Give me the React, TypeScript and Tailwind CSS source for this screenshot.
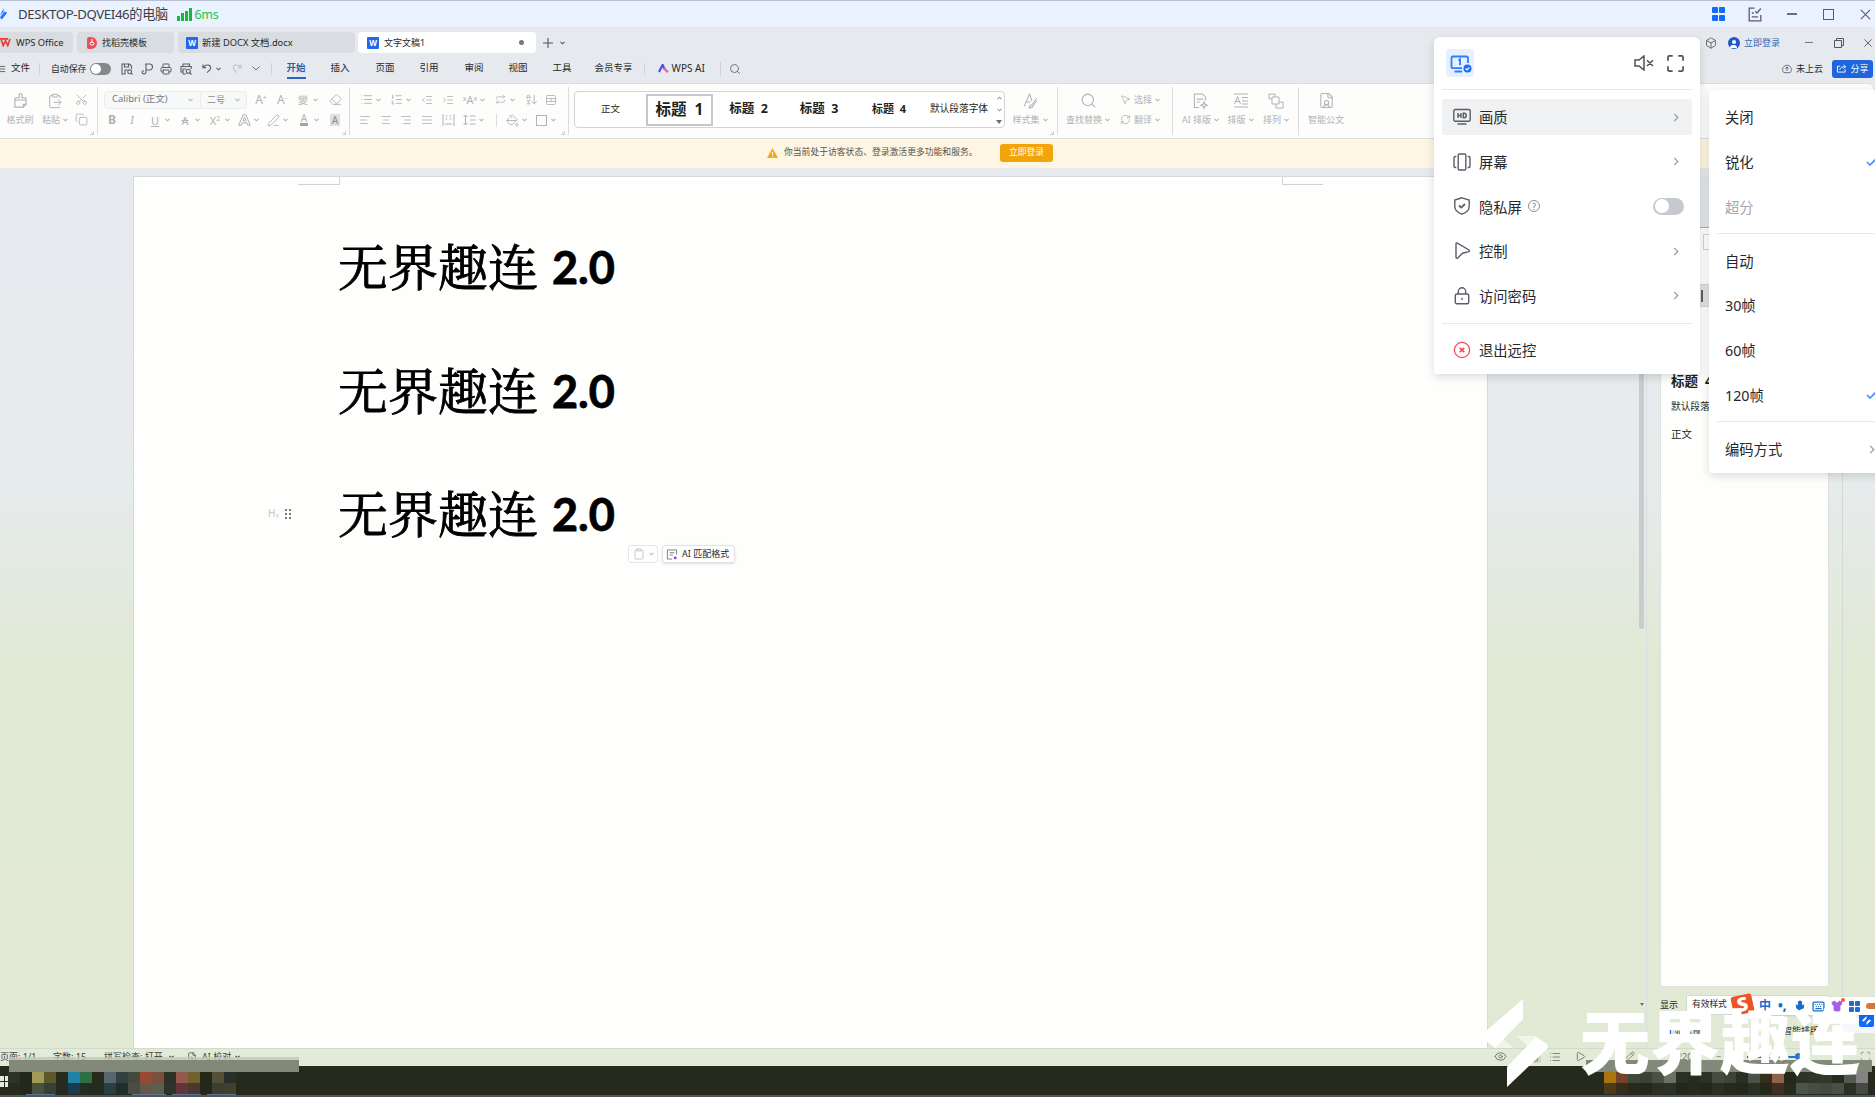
import React from "react";
import {
  AlignCenter, AlignJustify, AlignLeft, AlignRight, Clipboard, ClipboardPaste, Copy, Eraser, FilePlus2,
  FileUser, Indent, Outdent, List, ListOrdered, MousePointer2, PaintBucket, Printer, Redo2, RefreshCw,
  Save, Scissors, Search, Square, Undo2, Box, Mic, Shirt, Keyboard, Eye, Play, Globe, Pencil, PenLine,
  TableCellsSplit, ArrowDownAZ, Repeat, Scan, Brush, FileSearch,
} from "lucide-react";

const Caret = ({ className = "" }: { className?: string }) => (
  <svg viewBox="0 0 6 4" className={"h-[4px] w-[5px] shrink-0 " + className}>
    <path d="M0.6 0.6 3 3 5.4 0.6" fill="none" stroke="currentColor" strokeWidth="1.3" />
  </svg>
);

const Chevron = ({ className = "" }: { className?: string }) => (
  <svg viewBox="0 0 6 10" className={"h-[9px] w-[6px] shrink-0 " + className}>
    <path d="M1 1 5 5 1 9" fill="none" stroke="#9297a3" strokeWidth="1.3" />
  </svg>
);

const Check = ({ className = "" }: { className?: string }) => (
  <svg viewBox="0 0 11 8" className={"h-[8px] w-[11px] shrink-0 " + className}>
    <path d="M1 4 4 7 10 1" fill="none" stroke="#3f8cff" strokeWidth="1.6" />
  </svg>
);

const Launcher = () => (
  <svg viewBox="0 0 5 5" className="absolute right-[3px] bottom-[3px] h-[4px] w-[4px]">
    <path d="M4.5 0V4.5H0M1.5 1.5 4 4" fill="none" stroke="#b9bbbd" strokeWidth="0.9" />
  </svg>
);

/* One ribbon button: a 14px glyph and, when it opens a list, a caret. */
function Tool({ gap, caret, children }: { gap: string; caret?: boolean; children: React.ReactNode }) {
  return (
    <div className={"flex shrink-0 items-center gap-[3px] " + gap}>
      <div className="flex h-[14px] w-[14px] items-center justify-center text-[12px] leading-none">{children}</div>
      {caret && <Caret />}
    </div>
  );
}

const ic = { size: 13, strokeWidth: 1.7 };

function BigTool({ icon, label, caret, className }: { icon: React.ReactNode; label: string; caret?: boolean; className: string }) {
  return (
    <div className={"flex shrink-0 flex-col items-center pt-[8px] " + className}>
      <div className="flex h-[17px] items-center">{icon}</div>
      <div className="mt-[4px] flex h-[13px] items-center gap-[3px] whitespace-nowrap text-[9px] leading-none">
        {label}
        {caret && <Caret />}
      </div>
    </div>
  );
}

function WordIcon() {
  return (
    <span className="flex h-[12px] w-[12px] shrink-0 items-center justify-center rounded-[1px] bg-[#2468ea] text-[8px] font-bold leading-none text-white">
      W
    </span>
  );
}

function TitleBar() {
  return (
    <header className="flex h-[27px] shrink-0 items-center border-t border-[#b7c1d3] bg-[#eaf1ff] text-[#3c4048]">
      <svg viewBox="0 0 9 14" className="h-[13px] w-[8px]">
        <path d="M4 0V4L0 8M0 10 2 13 8 5 5 3.5Z" fill="#2277ff" />
      </svg>
      <span className="ml-[10px] w-[151px] pt-[2px] whitespace-nowrap text-[13.2px] tracking-[-0.35px]">DESKTOP-DQVEI46的电脑</span>
      <div className="ml-[8px] flex h-[13px] items-end gap-[1.5px]">
        <i className="h-[5px] w-[2.5px] bg-[#16b93c]" />
        <i className="h-[8px] w-[2.5px] bg-[#16b93c]" />
        <i className="h-[10px] w-[2.5px] bg-[#16b93c]" />
        <i className="h-[13px] w-[2.5px] bg-[#16b93c]" />
      </div>
      <span className="ml-[3px] pt-[2px] text-[12.5px] tracking-[-0.3px] text-[#1ec63f]">6ms</span>
      <div className="ml-auto flex items-center pr-[4px]">
        <div className="grid grid-cols-2 gap-[1.5px]">
          <i className="h-[6px] w-[6px] rounded-[1px] bg-[#0f6cff]" />
          <i className="h-[6px] w-[6px] rounded-[1px] bg-[#0f6cff]" />
          <i className="h-[6px] w-[6px] rounded-[1px] bg-[#0f6cff]" />
          <i className="h-[6px] w-[6px] rounded-[1px] bg-[#0f6cff]" />
        </div>
        <svg viewBox="0 0 14 15" className="ml-[23px] h-[15px] w-[14px]" fill="none" stroke="#5a5e67" strokeWidth="1.3">
          <path d="M6.5 1.2H1.2V13.8H12.8V8M3.8 6H5.8M3.8 9.8H10M7.3 4.3 9 6 12.8 1.5" />
        </svg>
        <i className="ml-[25px] h-[1.5px] w-[10px] bg-[#6a6e77]" />
        <i className="ml-[26px] h-[11px] w-[11px] border-[1.5px] border-[#5a5e67]" />
        <svg viewBox="0 0 12 12" className="ml-[26px] h-[11px] w-[11px]" stroke="#5a5e67" strokeWidth="1.2">
          <path d="M1 1 11 11M11 1 1 11" />
        </svg>
      </div>
    </header>
  );
}

function TabBar() {
  return (
    <div className="flex h-[31px] shrink-0 items-center text-[9.5px] text-[#26282b]">
      <div className="flex h-[21px] w-[73px] items-center rounded-r-[4px] bg-[#d9dce0]">
        <svg viewBox="0 0 12 10" className="h-[9px] w-[11px]" fill="none" stroke="#ea3b35" strokeWidth="1.8">
          <path d="M0 1H9M1 1 3.5 8.5 6 3 8.5 8.5 11 1" />
        </svg>
        <span className="ml-[5px] whitespace-nowrap text-[9.3px]">WPS Office</span>
      </div>
      <div className="ml-[4px] flex h-[21px] w-[97px] items-center rounded-[4px] bg-[#d9dce0] pl-[10px]">
        <span className="flex h-[12px] w-[10px] items-center justify-center rounded-l-[2px] rounded-r-[6px] bg-[#ee4f55]">
          <svg viewBox="0 0 6 8" className="h-[8px] w-[6px]" fill="none" stroke="white"><path d="M3 0V4M1 4.5a2 1.6 0 1 0 4 0 2 1.6 0 1 0-4 0" /></svg>
        </span>
        <span className="ml-[5px] text-[9px]">找稻壳模板</span>
      </div>
      <div className="ml-[4px] flex h-[21px] w-[177px] items-center rounded-[4px] bg-[#d9dce0] pl-[8px]">
        <WordIcon />
        <span className="ml-[4px] whitespace-nowrap text-[9.3px]">新建 DOCX 文档.docx</span>
      </div>
      <div className="ml-[3px] flex h-[21px] w-[178px] items-center rounded-[4px] bg-white pl-[9px]">
        <WordIcon />
        <span className="ml-[5px] text-[9px]">文字文稿1</span>
        <i className="ml-auto mr-[12px] h-[5px] w-[5px] rounded-full bg-[#77797c]" />
      </div>
      <svg viewBox="0 0 10 10" className="ml-[7px] h-[10px] w-[10px]" stroke="#54575a" strokeWidth="1.1"><path d="M5 0V10M0 5H10" /></svg>
      <Caret className="ml-[7px] text-[#54575a]" />
      <div className="ml-auto flex items-center pr-[3px]">
        <Box size={12} strokeWidth={2} color="#6a6e72" />
        <span className="ml-[11px] flex h-[12px] w-[12px] flex-col items-center justify-end overflow-hidden rounded-full bg-[#2456cf] pb-[1px]">
          <i className="h-[4px] w-[4px] rounded-full bg-white" />
          <i className="mt-[1px] h-[3px] w-[7px] rounded-t-full bg-white" />
        </span>
        <span className="ml-[4px] text-[9px] text-[#2f68b8]">立即登录</span>
        <i className="ml-[25px] h-px w-[8px] bg-[#77797c]" />
        <svg viewBox="0 0 10 10" className="ml-[21px] h-[10px] w-[10px]" fill="none" stroke="#54575a"><path d="M0.5 2.5H7.5V9.5H0.5ZM2.5 2.5V0.5H9.5V7.5H7.5" /></svg>
        <svg viewBox="0 0 9 9" className="ml-[20px] h-[8px] w-[8px]" stroke="#54575a"><path d="M0.5 0.5 8.5 8.5M8.5 0.5 0.5 8.5" /></svg>
      </div>
    </div>
  );
}

const menuTabs: [string, string][] = [
  ["插入", "ml-[25px]"], ["页面", "ml-[26px]"], ["引用", "ml-[25px]"], ["审阅", "ml-[26px]"],
  ["视图", "ml-[25px]"], ["工具", "ml-[25px]"], ["会员专享", "ml-[23px]"],
];

function MenuBar() {
  return (
    <div className="flex h-[25px] shrink-0 items-center pb-[4px] text-[9.5px] text-[#26282b]">
      <svg viewBox="0 0 7 8" className="h-[8px] w-[6px]" stroke="#54575a"><path d="M0 1H6M0 4H6M0 7H6" /></svg>
      <span className="ml-[5px] w-[19px] whitespace-nowrap">文件</span>
      <i className="ml-[9px] h-[12px] w-px bg-[#cfd2d6]" />
      <span className="ml-[11px] w-[36px] whitespace-nowrap text-[8.9px]">自动保存</span>
      <span className="ml-[3px] flex h-[12px] w-[21px] items-center rounded-full bg-[#85878a] p-[1px]">
        <i className="h-[10px] w-[10px] rounded-full bg-white" />
      </span>
      <div className="ml-[10px] flex items-center gap-[7.5px] text-[#5b5e62]">
        <svg viewBox="0 0 12 12" className="h-[12px] w-[12px]" fill="none" stroke="currentColor" strokeWidth="1.1"><path d="M4.5 11H1V1H8.5L10.5 3V6M3.5 1V4H7.5V1M4 11V7H6.5" /><circle cx="8.6" cy="8.8" r="1.9" /><path d="M10 10.2 11.5 11.5" /></svg>
        <svg viewBox="0 0 12 12" className="h-[12px] w-[12px]" fill="none" stroke="currentColor" strokeWidth="1.1"><path d="M4 1H8.5a2.5 2.5 0 0 1 0 6H5V1M5 7V9.5a2 1.6 0 1 1-2-1.8" /></svg>
        <Printer size={12} strokeWidth={2} />
        <svg viewBox="0 0 12 12" className="h-[12px] w-[12px]" fill="none" stroke="currentColor" strokeWidth="1.1"><path d="M3 3.5V1H9.5V3.5M3 9H1V3.5H11.2V6M3 11V6H6M3 11H6" /><circle cx="8.3" cy="8.3" r="2" /><path d="M9.8 9.8 11.5 11.5" /></svg>
      </div>
      <svg viewBox="0 0 11 11" className="ml-[10px] h-[11px] w-[10px]" fill="none" stroke="#5b5e62" strokeWidth="1.2"><path d="M1 1V4.5H4.5M1.3 4.2C4 0.6 9.5 1 9.5 4.8 9.5 7 7.5 8.5 5.5 10" /></svg>
      <Caret className="ml-[4px] text-[#5b5e62]" />
      <svg viewBox="0 0 11 11" className="ml-[11px] h-[11px] w-[10px]" fill="none" stroke="#c0c3c7" strokeWidth="1.2"><path d="M10 1V4.5H6.5M9.7 4.2C7 0.6 1.5 1 1.5 4.8 1.5 7 3.5 8.5 5.5 10" /></svg>
      <svg viewBox="0 0 8 5" className="ml-[10px] h-[5px] w-[8px]" fill="none" stroke="#6a6e72"><path d="M0.5 0.5 4 4 7.5 0.5" /></svg>
      <i className="ml-[11px] h-[12px] w-px bg-[#cfd2d6]" />
      <span className="relative ml-[15px] w-[19px] whitespace-nowrap font-bold text-[#2a5ca8]">
        开始
        <i className="absolute -bottom-[3px] left-0 h-[1.5px] w-[19px] bg-[#2a64bb]" />
      </span>
      {menuTabs.map(([label, gap]) => (
        <span key={label} className={"shrink-0 whitespace-nowrap " + gap}>{label}</span>
      ))}
      <i className="ml-[11px] h-[12px] w-px bg-[#cfd2d6]" />
      <svg viewBox="0 0 12 10" className="ml-[13px] h-[9px] w-[11px]" fill="none" strokeWidth="2.4">
        <path d="M1 9 5 1 7.5 6" stroke="#3f54ee" />
        <path d="M6.5 4 8 6.5 11 9" stroke="#ee55a8" />
      </svg>
      <span className="ml-[3px] whitespace-nowrap text-[10px]">WPS AI</span>
      <i className="ml-[15px] h-[14px] w-px bg-[#cfd2d6]" />
      <Search size={12} strokeWidth={1.9} className="ml-[8px] text-[#6a6e72]" />
      <div className="ml-auto flex items-center pr-[2px]">
        <svg viewBox="0 0 13 12" className="h-[11px] w-[12px]" fill="none" stroke="#6a6e72"><path d="M3 10.5a4.8 4.8 0 1 1 7 0Z" /><path d="M6.5 8.5V4.5M4.8 6 6.5 4.2 8.2 6" stroke="#3b52c4" /></svg>
        <span className="ml-[3px] text-[9px]">未上云</span>
        <span className="ml-[9px] flex h-[18px] w-[41px] items-center justify-center gap-[3px] rounded-[3px] bg-[#1f66dc] text-white">
          <svg viewBox="0 0 11 10" className="h-[9px] w-[11px]" fill="none" stroke="white"><path d="M4 2.5H1V9H9.5V6M3.5 6.5C4 4 6 3 10 3M7.8 0.8 10 3 7.8 5.2" /></svg>
          <span className="text-[9px]">分享</span>
        </span>
      </div>
    </div>
  );
}

const Sep = () => <i className="my-[3px] w-px shrink-0 bg-[#dadcde]" />;

function Ribbon() {
  return (
    <div className="mr-[2px] flex h-[56px] shrink-0 rounded-tr-[5px] border-t border-b border-[#dadde2] bg-[#fdfdfc] text-[#b0b2b5]">
      <div className="relative flex w-[97px] shrink-0">
        <BigTool className="w-[40px]" label="格式刷" icon={
          <svg viewBox="0 0 16 17" className="h-[17px] w-[15px]" fill="none" stroke="currentColor" strokeWidth="1.2"><path d="M6.5 5.5V2Q8 0 9.5 2V5.5H13Q14 5.5 14 7V8H2V7Q2 5.5 3 5.5ZM2 8V15.5H11L14 12.5V8M11 15.5V12.5H14" /></svg>
        } />
        <BigTool className="w-[30px]" label="粘贴" caret icon={<ClipboardPaste size={16} strokeWidth={1.5} />} />
        <div className="ml-[5px] flex flex-col pt-[9px]">
          <Scissors size={13} strokeWidth={1.6} className="-rotate-90" />
          <Copy size={13} strokeWidth={1.6} className="mt-[7px]" />
        </div>
        <Launcher />
      </div>
      <Sep />
      <div className="relative w-[251px] shrink-0 pt-[6px]">
        <div className="flex h-[19px] items-center">
          <div className="ml-[6px] flex h-[18px] w-[97px] items-center justify-between rounded-l-[3px] border border-[#eceeee] bg-[#f7f8f8] px-[7px] text-[9.5px] text-[#77797c]">
            Calibri (正文)<Caret className="text-[#b3b5b8]" />
          </div>
          <div className="flex h-[18px] w-[46px] items-center justify-between rounded-r-[3px] border border-l-0 border-[#eceeee] bg-[#f7f8f8] px-[6px] text-[9px] text-[#8b8d90]">
            二号<Caret className="text-[#b3b5b8]" />
          </div>
          <Tool gap="ml-[7px]"><span>A<sup className="text-[7px]">+</sup></span></Tool>
          <Tool gap="ml-[7px]"><span>A<sup className="text-[7px]">-</sup></span></Tool>
          <Tool gap="ml-[7px]" caret><span className="text-[10px]">變</span></Tool>
          <Tool gap="ml-[10px]"><Eraser {...ic} /></Tool>
        </div>
        <div className="mt-[2px] flex h-[18px] items-center">
          <Tool gap="ml-[7px]"><b>B</b></Tool>
          <Tool gap="ml-[6px]"><i className="font-serif">I</i></Tool>
          <Tool gap="ml-[9px]" caret><span className="text-[11px] underline">U</span></Tool>
          <Tool gap="ml-[8px]" caret><span className="text-[11px] line-through">A</span></Tool>
          <Tool gap="ml-[8px]" caret><span className="text-[11px]">X<sup className="text-[7px]">2</sup></span></Tool>
          <Tool gap="ml-[7px]" caret><svg viewBox="0 0 13 12" className="h-[12px] w-[13px]" fill="none" stroke="currentColor"><path d="M0.7 11.3 5.2 0.8H7.8L12.3 11.3H9.8L8.8 8.8H4.2L3.2 11.3ZM5 6.8H8L6.5 3Z" /></svg></Tool>
          <Tool gap="ml-[7px]" caret><PenLine {...ic} /></Tool>
          <Tool gap="ml-[9px]" caret><span className="border-b-[3px] border-[#a0a2a5] px-[1px] text-[10px] leading-[9px]">A</span></Tool>
          <Tool gap="ml-[9px]"><span className="bg-[#dddfe0] px-[2px] text-[10px] leading-[12px] text-[#8b8d90]">A</span></Tool>
        </div>
        <Launcher />
      </div>
      <Sep />
      <div className="relative w-[218px] shrink-0 pt-[6px]">
        <div className="flex h-[19px] items-center">
          <Tool gap="ml-[9px]" caret><List {...ic} /></Tool>
          <Tool gap="ml-[8px]" caret><ListOrdered {...ic} /></Tool>
          <Tool gap="ml-[9px]"><Outdent {...ic} size={12} /></Tool>
          <Tool gap="ml-[7px]"><Indent {...ic} size={12} /></Tool>
          <Tool gap="ml-[8px]" caret><span className="text-[11px]">ˣAˣ</span></Tool>
          <Tool gap="ml-[8px]" caret><Repeat {...ic} size={11} /></Tool>
          <Tool gap="ml-[9px]"><ArrowDownAZ {...ic} className="-scale-x-100" /></Tool>
          <Tool gap="ml-[6px]"><TableCellsSplit {...ic} size={12} /></Tool>
        </div>
        <div className="mt-[2px] flex h-[18px] items-center">
          <Tool gap="ml-[8px]"><AlignLeft {...ic} size={12} /></Tool>
          <Tool gap="ml-[7px]"><AlignCenter {...ic} size={12} /></Tool>
          <Tool gap="ml-[6px]"><AlignRight {...ic} size={12} /></Tool>
          <Tool gap="ml-[7px]"><AlignJustify {...ic} size={12} /></Tool>
          <Tool gap="ml-[7px]">
            <svg viewBox="0 0 13 12" className="h-[12px] w-[13px]" fill="none" stroke="currentColor"><path d="M1 0V12M12 0V12M3.5 2H5.5M7.5 2H9.5M3.5 5H5.5M7.5 5H9.5M3 10H10" /></svg>
          </Tool>
          <Tool gap="ml-[7px]" caret>
            <svg viewBox="0 0 13 12" className="h-[12px] w-[13px]" fill="none" stroke="currentColor"><path d="M2.5 1V11M0.5 3 2.5 1 4.5 3M0.5 9 2.5 11 4.5 9M7 2H12.5M7 6H12.5M7 10H12.5" /></svg>
          </Tool>
          <i className="ml-[12px] h-[13px] w-px bg-[#dadcde]" />
          <Tool gap="ml-[8px]" caret><PaintBucket {...ic} /></Tool>
          <Tool gap="ml-[7px]" caret><span className="h-[11px] w-[11px] border border-[#b0b2b5]" /></Tool>
        </div>
        <Launcher />
      </div>
      <Sep />
      <div className="mt-[7px] ml-[5px] flex h-[37px] w-[431px] shrink-0 items-center rounded-[4px] border border-[#d2d4d6] bg-white text-center text-[#1d1f21]">
        <span className="w-[71px] text-[9.5px]">正文</span>
        <span className="flex h-[32px] w-[67px] items-center justify-center border-2 border-[#c6c9c9] text-[15.5px] font-bold">标题&nbsp;&nbsp;1</span>
        <span className="w-[71px] text-[12.5px] font-bold">标题&nbsp;&nbsp;2</span>
        <span className="w-[70px] text-[12.5px] font-bold">标题&nbsp;&nbsp;3</span>
        <span className="w-[70px] text-[11px] font-bold">标题&nbsp;&nbsp;4</span>
        <span className="w-[70px] whitespace-nowrap text-[9.7px]">默认段落字体</span>
        <div className="flex flex-1 flex-col items-center gap-[8px] pl-[0px] text-[#9a9c9f]">
          <Caret className="rotate-180" />
          <Caret />
          <i className="h-0 w-0 border-x-[3px] border-t-[4px] border-x-transparent border-t-[#6a6e72]" />
        </div>
      </div>
      <div className="relative flex w-[52px] shrink-0">
        <BigTool className="w-[50px]" label="样式集" caret icon={
          <svg viewBox="0 0 15 17" className="h-[16px] w-[15px]" fill="none" stroke="currentColor" strokeWidth="1.1"><path d="M0.8 14 6.5 1.2 9 8.5M3 9.5H7.5M14 5.5 9 12.5Q6.5 12.5 6 15.8 9.8 16 10.2 13.5L14 8.5" /></svg>
        } />
        <Launcher />
      </div>
      <Sep />
      <div className="flex w-[114px] shrink-0">
        <BigTool className="w-[60px]" label="查找替换" caret icon={<Search size={17} strokeWidth={1.5} />} />
        <div className="ml-[2px] flex flex-col gap-[7px] pt-[9px] text-[9px]">
          <div className="flex h-[13px] items-center gap-[3px]"><MousePointer2 size={11} strokeWidth={1.8} />选择<Caret /></div>
          <div className="flex h-[13px] items-center gap-[3px]"><RefreshCw size={11} strokeWidth={1.8} />翻译<Caret /></div>
        </div>
      </div>
      <Sep />
      <div className="flex w-[125px] shrink-0 pl-[6px]">
        <BigTool className="w-[43px]" label="AI 排版" caret icon={
          <svg viewBox="0 0 16 17" className="h-[16px] w-[15px]" fill="none" stroke="currentColor" strokeWidth="1.1"><path d="M6.5 15.5H1.5V1H10L13.5 4.5V8M4 6.5H11M4 9.5H7M11.8 9.5 12.8 12 15.3 13 12.8 14 11.8 16.5 10.8 14 8.3 13 10.8 12Z" /></svg>
        } />
        <BigTool className="w-[37px]" label="排版" caret icon={
          <svg viewBox="0 0 16 15" className="h-[15px] w-[16px]" fill="none" stroke="currentColor"><path d="M1 1H15M9 4.5H15M9 8H15M9 11H15M1 14H15M1.5 11 4.5 3.5 7.5 11M2.5 8.5H6.5" /></svg>
        } />
        <BigTool className="w-[34px]" label="排列" caret icon={
          <svg viewBox="0 0 16 16" className="h-[16px] w-[16px]" fill="none" stroke="currentColor"><path d="M4 6H1V1H7V4M4 4H11V11H4ZM11 9H15V15H8V11" /></svg>
        } />
      </div>
      <Sep />
      <BigTool className="w-[54px]" label="智能公文" icon={<FileUser size={17} strokeWidth={1.5} />} />
    </div>
  );
}

function Notice() {
  return (
    <div className="flex h-[29px] shrink-0 items-center bg-[#fef5e2] pb-px pl-[767px] text-[8.8px] text-[#55534d]">
      <svg viewBox="0 0 12 11" className="h-[10px] w-[11px]"><path d="M6 0 12 11H0Z" fill="#f5a615" /><path d="M6 4V7.5M6 8.5V9.6" stroke="white" strokeWidth="1.2" /></svg>
      <span className="ml-[6px] w-[216px] whitespace-nowrap">你当前处于访客状态、登录激活更多功能和服务。</span>
      <span className="flex h-[18px] w-[53px] items-center justify-center rounded-[3px] bg-[#f2a40d] text-white">立即登录</span>
    </div>
  );
}

function Page() {
  return (
    <section className="relative ml-[133px] w-[1355px] shrink-0 border-x border-t border-[#d5d9db] bg-[#fefefd]">
      <div className="flex justify-between pr-[164px] pl-[164px]">
        <i className="h-[8px] w-[42px] border-r border-b border-[#cfd1d2]" />
        <i className="h-[8px] w-[41px] border-b border-l border-[#cfd1d2]" />
      </div>
      <div className="mt-[41px] flex flex-col pl-[204px] text-black">
        {[0, 1, 2].map((n) => (
          <h1 key={n} className="flex h-[123.5px] items-start whitespace-nowrap text-[50px] leading-[76px]">
            <span className="font-['Noto_Serif_CJK_SC','Noto_Serif_SC','Noto_Sans_CJK_SC',serif] [-webkit-text-stroke:0.9px_black]">无界趣连</span>
            <span className="ml-[14px] pt-[3px] font-[Lato] text-[45px] font-bold [-webkit-text-stroke:0.8px_black]">2.0</span>
          </h1>
        ))}
      </div>
      <div className="absolute top-[329px] left-[134px] flex items-center gap-[6px] text-[10px] text-[#c3c5c6]">
        H₁
        <div className="grid grid-cols-2 gap-[2px]">
          {[0, 1, 2, 3, 4, 5].map((n) => <i key={n} className="h-[2px] w-[2px] bg-[#77797c]" />)}
        </div>
      </div>
      <div className="absolute top-[368px] left-[494px] flex gap-[4px] text-[9px] text-[#26282b]">
        <span className="flex h-[18px] w-[30px] items-center justify-center gap-[4px] rounded-[3px] border border-[#e6e7e8] text-[#bbbdc0]">
          <Clipboard size={12} strokeWidth={1.6} /><Caret />
        </span>
        <span className="flex h-[18px] w-[73px] items-center gap-[4px] rounded-[3px] border border-[#e0e2e3] pl-[3px] whitespace-nowrap shadow-sm">
          <svg viewBox="0 0 12 12" className="h-[11px] w-[12px] shrink-0" fill="none" stroke="#77797c"><path d="M11 6V1H1V11H6M3.5 4H8.5M3.5 6.5H7" /><circle cx="9.5" cy="9.5" r="1.7" fill="#8d55ee" stroke="none" /></svg>
          AI 匹配格式
        </span>
      </div>
    </section>
  );
}

function StylePane() {
  return (
    <aside className="relative ml-[2px] flex w-[230px] shrink-0 flex-col border-l border-[#d9dddf] pl-[13px] text-[#1d1f21]">
      <div className="h-[811px] w-[169px] shrink-0 rounded-b-[3px] border border-[#dfe2df] bg-[#fefefd] pt-[193px] pl-[10px]">
        <p className="text-[13.5px] leading-[22px] font-bold">标题&nbsp; 4</p>
        <p className="mt-[5px] text-[9.7px] leading-[20px]">默认段落字体</p>
        <p className="mt-[6px] text-[10.5px] leading-[22px]">正文</p>
      </div>
      <i className="absolute top-0 bottom-0 left-[195px] w-px bg-[#d5d9d6]" />
      <div className="mt-[8px] flex h-[20px] items-center gap-[8px] text-[9px]">
        显示
        <span className="flex h-[20px] w-[143px] items-center rounded-[2px] border border-[#d5d9d2] bg-white pl-[5px] text-[8.8px] tracking-[-0.1px]">有效样式</span>
      </div>
      <div className="mt-[9px] flex h-[14px] items-center gap-[3px] pl-[6px] text-[9px]">
        <i className="h-[5px] w-[5px] bg-[#1b73e8]" />显示预览
        <span className="ml-[70px]">智能排版</span>
      </div>
    </aside>
  );
}

function StatusBar() {
  return (
    <footer className="flex h-[18px] shrink-0 items-center border-t border-[#d3dacb] bg-[#e2ead8] pb-[2px] text-[9px] whitespace-nowrap text-[#3a3d38]">
      <span className="w-[44px]">页面: 1/1</span>
      <span className="w-[43px] pl-[9px]">字数: 15</span>
      <span className="flex w-[100px] items-center gap-[6px] pl-[17px]">拼写检查: 打开<Caret /></span>
      <FileSearch size={10} strokeWidth={1.6} />
      <span className="ml-[5px] flex items-center gap-[4px]">AI 校对<Caret /></span>
      <div className="ml-auto flex items-center text-[#6d7268]">
        <Eye size={13} strokeWidth={1.7} />
        <span className="ml-[20px] flex h-[13px] w-[14px] items-center justify-center bg-[#cdd5c5]"><FileSearch size={10} /></span>
        <List size={12} strokeWidth={1.7} className="ml-[8px]" />
        <Play size={11} strokeWidth={1.9} className="ml-[14px]" />
        <Globe size={11} strokeWidth={1.7} className="ml-[13px]" />
        <Pencil size={11} strokeWidth={1.7} className="ml-[14px]" />
        <span className="ml-[42px]">220%</span>
        <span className="ml-[16px]">−</span>
        <i className="ml-[26px] h-[2px] w-[48px] bg-[#2a6fd6]" />
        <i className="h-[7px] w-[7px] rounded-full bg-[#2a6fd6]" />
        <Scan size={11} strokeWidth={1.5} className="mr-[4px] ml-[58px]" />
      </div>
    </footer>
  );
}

/* Pixelated taskbar thumbnails: upper and lower cell rows on a 12px grid. */
const leftTop = ["#2e3325", "#23281a", "#a49a58", "#5b582e", "#262b1d", "#1f83a8", "#2f6d42", "#262b1d", "#5a6370", "#333f40", "#434a3c", "#964a32", "#7a503c", "#2d3226", "#955a4d", "#735f2d", "#232817", "#554f35", "#272f2b"];
const leftLow = ["#262b1d", "#23281a", "#48523f", "#374034", "#262b1d", "#1b3c50", "#232c26", "#262b1d", "#274043", "#202e2b", "#4a4d43", "#665848", "#5e5d52", "#2d342a", "#60353c", "#483831", "#23281a", "#3c3e2e", "#3e4030"];
const rightTop = ["#a9750f", "#74422a", "#414739", "#3b4133", "#4a5044", "#6b7265", "#2b3022", "#272c1e", "#2d3224", "#454b41", "#3d4335", "#2a2f22", "#4a5149", "#352e1c", "#8f6349", "#23281a", "#2d3426", "#2f372a", "#30372b", "#262b1d", "#55594f", "#838381"];
const rightLow = ["#4b3b18", "#352d1b", "#262b1d", "#23281a", "#2b3022", "#2d3226", "#23281a", "#262b1d", "#23281a", "#2b3023", "#262b1d", "#23281a", "#2b3024", "#23281a", "#402f1f", "#262b1d", "#4d544a", "#474d41", "#43493f", "#4a5045", "#2b3024", "#454943"];

function Cells({ colors }: { colors: string[] }) {
  return (
    <div className="flex h-[11px]">
      {colors.map((c, n) => <i key={n} className="h-full w-[12px]" style={{ backgroundColor: c }} />)}
    </div>
  );
}

function TaskBar() {
  return (
    <div className="relative flex h-[31px] shrink-0 border-b-2 border-[#53555e] bg-[#252a1c]">
      <div className="mt-[10px] grid h-[11px] w-[8px] grid-cols-2 gap-px">
        <i className="bg-[#e6e8e2]" /><i className="bg-[#e6e8e2]" /><i className="bg-[#e6e8e2]" /><i className="bg-[#e6e8e2]" />
      </div>
      <div className="mt-[6px]"><Cells colors={leftTop} /><Cells colors={leftLow} />
        <div className="flex h-[1px] gap-[6px] pl-[18px]">
          <i className="w-[29px] bg-[#58748a]" /><i className="ml-[71px] w-[34px] bg-[#58748a]" /><i className="w-[29px] bg-[#58748a]" /><i className="w-[29px] bg-[#58748a]" />
        </div>
      </div>
      <div className="mt-[6px] mr-[7px] ml-auto"><Cells colors={rightTop} /><Cells colors={rightLow} /></div>
      <i className="absolute -top-[9px] left-[9px] h-[3px] w-[290px] bg-[#c3cab7]/80" />
      <i className="absolute -top-[6px] left-[9px] h-[12px] w-[290px] bg-[#838978]" />
      <i className="absolute -top-[6px] left-[1586px] h-[12px] w-[286px] bg-[#838978]" />
    </div>
  );
}

const menuIcon = "h-[18px] w-[18px] shrink-0";

const menuItems: { label: string; icon: React.ReactNode; end: React.ReactNode; help?: boolean; active?: boolean }[] = [
  {
    label: "画质", active: true, end: <Chevron className="mr-[13px]" />,
    icon: <><rect x="0.8" y="1.5" width="16.4" height="11.8" rx="1.5" /><path d="M4.5 16H13.5M5 5V10M8 5V10M5 7.5H8M10.3 5.3V9.7H11.3a2 2.2 0 0 0 0-4.4Z" /></>,
  },
  {
    label: "屏幕", end: <Chevron className="mr-[13px]" />,
    icon: <><rect x="5.2" y="1" width="7.6" height="16" rx="1" /><path d="M3.3 3.5H2.4Q1 3.5 1 5V13Q1 14.5 2.4 14.5H3.3M14.7 3.5H15.6Q17 3.5 17 5V13Q17 14.5 15.6 14.5H14.7" /></>,
  },
  {
    label: "隐私屏", help: true,
    end: <span className="mr-[8px] flex h-[17px] w-[31px] items-center rounded-full bg-[#c6c9d1] p-[1.5px]"><i className="h-[14px] w-[14px] rounded-full bg-white" /></span>,
    icon: <><path d="M9 0.8 16.2 3V9.5Q16.2 14.5 9 17.2 1.8 14.5 1.8 9.5V3Z" /><path d="M6 8.5 8.3 10.6 12 7" strokeWidth="1.8" /></>,
  },
  { label: "控制", end: <Chevron className="mr-[13px]" />, icon: <path d="M3 2Q3 0.5 4.3 1.2L16 8Q17 9 15.7 9.6L9.5 11.2 5 15.8Q3 17 3 15Z" /> },
  {
    label: "访问密码", end: <Chevron className="mr-[13px]" />,
    icon: <><rect x="2.3" y="7" width="13.4" height="9.8" rx="1.5" /><path d="M5.3 7V4.5a3.7 3.7 0 0 1 7.4 0V7M9 10.8V13" /></>,
  },
];

function RemoteMenu() {
  return (
    <div className="absolute top-[37px] left-[1434px] h-[337px] w-[266px] rounded-[6px] rounded-b-[2px] bg-white px-[8px] pt-[12px] text-[14.3px] text-[#25282d] shadow-[0_3px_10px_rgba(0,0,0,0.14)]">
      <div className="flex h-[28px] items-center pl-[4px]">
        <span className="flex h-[28px] w-[28px] items-center justify-center rounded-[4px] bg-[#e7f0ff] pt-px pl-px">
          <svg viewBox="0 0 22 18" className="h-[18px] w-[22px]" fill="none" stroke="#2c7dff" strokeWidth="1.8">
            <path d="M12 13.2H3Q1.5 13.2 1.5 11.7V3Q1.5 1.5 3 1.5H16.5Q18 1.5 18 3V8M4.5 16.5H12M8.5 5.3 10 4.3V10.2" />
            <circle cx="17.5" cy="13.5" r="4" fill="#1b6dff" stroke="none" />
            <path d="M15.6 13.5 17 14.9 19.4 12.4" stroke="white" strokeWidth="1.1" />
          </svg>
        </span>
        <svg viewBox="0 0 20 16" className="ml-[160px] h-[16px] w-[20px]" fill="none" stroke="#4d515a" strokeWidth="1.5">
          <path d="M1 5H5L10 1V15L5 11H1ZM13 5.2 19 11M19 5.2 13 11" />
        </svg>
        <svg viewBox="0 0 18 18" className="ml-[13px] h-[17px] w-[17px]" fill="none" stroke="#4d515a" strokeWidth="1.8">
          <path d="M1 6V2.5Q1 1 2.5 1H6M12 1H15.5Q17 1 17 2.5V6M17 12V15.5Q17 17 15.5 17H12M6 17H2.5Q1 17 1 15.5V12" />
        </svg>
      </div>
      <i className="mt-[12px] block h-px bg-[#e8e9ec]" />
      <div className="mt-[9px] flex flex-col gap-[8.7px]">
        {menuItems.map((m) => (
          <div key={m.label} className={"flex h-[36px] items-center rounded-[3px] pl-[11px] " + (m.active ? "bg-[#f0f1f3]" : "")}>
            <svg viewBox="0 0 18 18" className={menuIcon} fill="none" stroke="#5a5e66" strokeWidth="1.4">{m.icon}</svg>
            <span className="ml-[8px] pt-[2px] whitespace-nowrap">{m.label}</span>
            {m.help && <span className="ml-[6px] flex h-[12px] w-[12px] items-center justify-center rounded-full border border-[#8c9099] text-[9px] leading-none text-[#747882]">?</span>}
            <span className="ml-auto">{m.end}</span>
          </div>
        ))}
      </div>
      <i className="mt-[9px] block h-px bg-[#e8e9ec]" />
      <div className="mt-[8px] flex h-[36px] items-center pl-[11px]">
        <svg viewBox="0 0 18 18" className={menuIcon} fill="none" stroke="#f5505a" strokeWidth="1.3">
          <circle cx="9" cy="9" r="7.6" /><path d="M6.8 6.8 11.2 11.2M11.2 6.8 6.8 11.2" strokeWidth="1.9" />
        </svg>
        <span className="ml-[8px] pt-[2px]">退出远控</span>
      </div>
    </div>
  );
}

function QualityMenu() {
  const row = "flex h-[36px] items-center justify-between";
  return (
    <div className="absolute top-[90px] left-[1709px] h-[383px] w-[180px] rounded-[3px] bg-white pt-[9px] pl-[16px] text-[14.3px] text-[#25282d] shadow-[0_3px_10px_rgba(0,0,0,0.14)]">
      <div className="flex flex-col gap-[9px] pr-[12px]">
        <div className={row}><span className="pt-[2px]">关闭</span></div>
        <div className={row}><span className="pt-[2px]">锐化</span><Check /></div>
        <div className={row + " text-[#a3a7b0]"}><span className="pt-[2px]">超分</span></div>
      </div>
      <i className="-ml-[8px] mt-[8px] block h-px bg-[#e8e9ec]" />
      <div className="mt-[9px] flex flex-col gap-[8.8px] pr-[12px]">
        <div className={row}><span className="pt-[2px]">自动</span></div>
        <div className={row}>30帧</div>
        <div className={row}>60帧</div>
        <div className={row}>120帧<Check /></div>
      </div>
      <i className="-ml-[8px] mt-[8px] block h-px bg-[#e8e9ec]" />
      <div className="mt-[9px] flex h-[36px] items-center justify-between pr-[14px]">编码方式<Chevron /></div>
    </div>
  );
}

/* Sliver of the style pane that shows between the two floating menus. */
function PaneGap() {
  return (
    <div className="absolute top-[177px] left-[1699px] flex h-[190px] w-[11px] flex-col overflow-hidden">
      <i className="h-[51px] w-full border-b border-[#a9adb0] bg-[#e3e7ea]" />
      <i className="mt-[6px] ml-[4px] h-[16px] w-[7px] border border-[#d2d5d5] bg-white" />
      <i className="h-[34px] w-full" />
      <i className="flex h-[23px] w-full items-center border border-[#d2d5d5] bg-[#e0e2e1]">
        <b className="ml-[1px] h-[12px] w-[2px] bg-[#5b5e62]" />
      </i>
      <i className="w-full flex-1 bg-[#fefefd]" />
    </div>
  );
}

function InputToolbar() {
  return (
    <>
      <div className="absolute top-[1013px] left-[1840px] flex h-[20px] w-[40px] justify-end rounded-[6px] bg-[#f5f7fa] pr-[6px]">
        <span className="flex h-[14px] w-[15px] items-center justify-center rounded-[2px] bg-[#0f6cff]">
          <svg viewBox="0 0 10 10" className="h-[9px] w-[9px]"><path d="M5 0V3L2 6 0 5ZM5 10V7L8 4 10 5Z" fill="white" /></svg>
        </span>
      </div>
      <div className="absolute top-[997px] left-[1732px] flex h-[18px] w-[143px] items-center bg-white text-[#1b6fc8] shadow-sm">
        <span className="-mt-[4px] flex h-[19px] w-[21px] shrink-0 -rotate-12 items-center justify-center rounded-[3px] bg-[#ee5423] text-[19px] leading-none font-black text-white">S</span>
        <span className="ml-[6px] text-[12px] leading-none font-bold">中</span>
        <span className="ml-[7px] text-[12px] leading-none font-black">•,</span>
        <Mic size={12} strokeWidth={2.4} fill="#1b6fc8" className="ml-[8px] shrink-0" />
        <Keyboard size={13} strokeWidth={2.4} className="ml-[6px] shrink-0" />
        <span className="relative ml-[6px] shrink-0 text-[#a45ee6]">
          <Shirt size={12} strokeWidth={1.6} fill="#a45ee6" />
          <i className="absolute -top-[2px] -right-[2px] h-[4px] w-[4px] rounded-full bg-[#f2543d]" />
        </span>
        <div className="ml-[6px] grid shrink-0 grid-cols-2 gap-px">
          {[0, 1, 2, 3].map((n) => <i key={n} className="h-[5px] w-[5px] rounded-[1px] bg-[#1b6fc8]" />)}
        </div>
        <i className="ml-[6px] h-[6px] w-[10px] rounded-l-full bg-[#d9773a]" />
      </div>
    </>
  );
}

function Watermark() {
  return (
    <div className="absolute top-[998px] left-[1483px] flex h-[90px] items-center text-white">
      <svg viewBox="0 0 66 90" className="h-[90px] w-[66px]">
        <path d="M34 38H53L57 42 46 49Z" fill="white" fillOpacity="0.5" />
        <path d="M16 38 31 50H11Z" fill="white" fillOpacity="0.5" />
        <path d="M40 1V21L12 50 2 42Q-1 38 2 34Z" fill="white" />
        <path d="M24 89V69L53 39 64 46Q66 49 63 52Z" fill="white" />
      </svg>
      <span className="-mt-[2px] ml-[31px] whitespace-nowrap text-[70px] leading-[90px] font-black tracking-[0px]">无界趣连</span>
    </div>
  );
}

export default function App() {
  return (
    <div className="relative flex h-[1097px] w-[1875px] flex-col overflow-hidden bg-[linear-gradient(180deg,#e6e9ed_0%,#e6eaee_25%,#e6ebeb_45%,#e0e9d3_62%,#e2ead6_100%)] font-['Noto_Sans','Noto_Sans_CJK_SC',sans-serif]">
      <TitleBar />
      <TabBar />
      <MenuBar />
      <Ribbon />
      <Notice />
      <div className="flex h-[880px] shrink-0 pt-[8px]">
        <Page />
        <div className="ml-[151px] flex w-[5px] shrink-0 flex-col items-center">
          <i className="h-[453px] w-[5px] rounded-b-full bg-[#c8ccce]" />
          <i className="mt-auto mb-[42px] h-0 w-0 border-x-[2.5px] border-t-[3px] border-x-transparent border-t-[#6d7268]" />
        </div>
        <StylePane />
      </div>
      <StatusBar />
      <TaskBar />
      <PaneGap />
      <RemoteMenu />
      <QualityMenu />
      <InputToolbar />
      <Watermark />
    </div>
  );
}
